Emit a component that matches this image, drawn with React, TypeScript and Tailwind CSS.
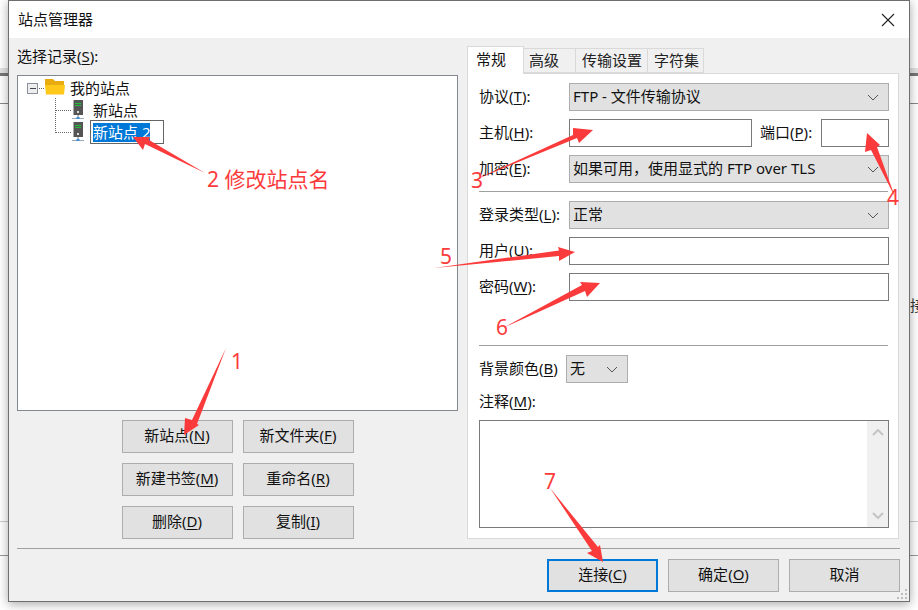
import type { ReactNode } from "react";

const FONT = "font-['Noto_Sans','Noto_Sans_CJK_SC',sans-serif]";

function Hot({ label, hot, tail = ":" }: { label: string; hot: string; tail?: string }) {
  return (
    <span className="inline-block -translate-y-px whitespace-nowrap">
      {label}(<span className="underline underline-offset-2">{hot}</span>){tail}
    </span>
  );
}

function Chevron({ className = "", weight = 1 }: { className?: string; weight?: number }) {
  return (
    <svg width="12" height="7" viewBox="0 0 12 7" className={className}>
      <path d="M1 1l5 5 5-5" fill="none" stroke="currentColor" strokeWidth={weight} />
    </svg>
  );
}

function Select({ text, className = "" }: { text: string; className?: string }) {
  return (
    <div className={`flex h-[28px] items-center justify-between border border-[#adadad] bg-[#e1e1e1] pl-[3px] pr-[9px] text-[#111] ${className}`}>
      <span className="-translate-y-px whitespace-pre">{text}</span>
      <Chevron className="text-[#555]" />
    </div>
  );
}

function Input({ className = "" }: { className?: string }) {
  return <div className={`h-[28px] border border-[#7a7a7a] bg-white ${className}`} />;
}

function Row({ label, children }: { label: ReactNode; children: ReactNode }) {
  return (
    <div className="mb-[8px] flex items-center">
      <div className="w-[90px] shrink-0">{label}</div>
      {children}
    </div>
  );
}

function Btn({ children, primary }: { children: ReactNode; primary?: boolean }) {
  return (
    <div
      className={`flex h-[33px] w-[111px] items-center justify-center bg-[#e1e1e1] pb-px ${
        primary ? "border-2 border-[#0078d7]" : "border border-[#adadad]"
      }`}
    >
      {children}
    </div>
  );
}

function ServerIcon() {
  return (
    <svg width="12" height="20" viewBox="0 0 12 20" className="shrink-0">
      <rect x="1" y="0" width="10" height="15" fill="#555" />
      <rect x="1" y="0" width="1" height="15" fill="#aaa" />
      <rect x="3" y="3" width="6" height="1" fill="#22c03a" />
      <rect x="3" y="5" width="6" height="1" fill="#22c03a" />
      <rect x="5" y="11" width="2" height="2" fill="#ddd" />
      <rect x="5.5" y="15" width="1" height="3" fill="#777" />
      <rect x="0" y="18" width="12" height="1" fill="#9ab" />
      <rect x="4.5" y="17" width="3" height="2" fill="#3a8fd8" />
    </svg>
  );
}

function FolderIcon() {
  return (
    <svg width="20" height="17" viewBox="0 0 20 17" className="shrink-0">
      <path d="M0 0h8l2 2h9v5H0z" fill="#e8ac10" />
      <path d="M0 6h20l-1 9.500H1z" fill="#ffc81a" />
    </svg>
  );
}

function Tree() {
  return (
    <div className="relative h-[336px] border border-[#828790] bg-white text-[#111]">
      <svg width="60" height="70" className="absolute left-0 top-0" shapeRendering="crispEdges">
        <rect x="9.5" y="7.5" width="10" height="10" fill="#eee" stroke="#8a8f9c" />
        <rect x="12" y="12" width="6" height="1" fill="#445" />
        <path d="M21 12.500h6M37.500 22v35M38 34.500h16M38 56.500h16" stroke="#666" strokeDasharray="1 1" fill="none" />
      </svg>
      <div className="pl-[27px] pt-[1px]">
        <div className="flex h-[21px] items-center gap-[5px]">
          <FolderIcon />
          <span>我的站点</span>
        </div>
        <div className="ml-[27px] mt-[1px] flex h-[22px] items-center gap-[8px]">
          <ServerIcon />
          <span className="ml-[1px]">新站点</span>
        </div>
        <div className="ml-[27px] flex h-[22px] items-center gap-[6px]">
          <ServerIcon />
          <div className="flex h-[24px] w-[74px] items-center border border-[#666] bg-white pl-[2px]">
            <span className="inline-block h-[19px] bg-[#0078d7] leading-[18px] text-white">新站点 2</span>
          </div>
        </div>
      </div>
    </div>
  );
}

function Annotations() {
  const arrows = [
    "226,348 197,424 199,425 184,435 185,418 192,420",
    "205,173 145,144 143,150 133,137 150,137 149,140",
    "470,182 573,135 573,128 593,130 579,143 577,138",
    "895,197 877,147 880,145 867,133 865,152 871,150",
    "434,268 559,256 559,261 575,252 558,247 559,250.500",
    "503,328 585,291 587,297 600,283 580,282 582,285",
    "550,488 592,551 587,553 603,562 600,545 598,547",
  ];
  const nums = [
    ["1", "left-[231px] top-[346px]"],
    ["3", "left-[471px] top-[165px]"],
    ["4", "left-[887px] top-[182px]"],
    ["5", "left-[440px] top-[241px]"],
    ["6", "left-[496px] top-[312px]"],
    ["7", "left-[544px] top-[466px]"],
  ];
  return (
    <div className="pointer-events-none absolute inset-0">
      <svg width="918" height="610" className="absolute inset-0">
        {arrows.map((p) => (
          <polygon key={p} points={p} fill="#fb3b3b" />
        ))}
      </svg>
      {nums.map(([n, pos]) => (
        <span key={n} className={`absolute text-[21px] leading-[30px] text-[#fb3b3b] ${pos}`}>
          {n}
        </span>
      ))}
      <span className="absolute left-[207px] top-[164px] whitespace-nowrap text-[21px] leading-[30px] text-[#fb3b3b]">
        2 修改站点名
      </span>
    </div>
  );
}

export default function App() {
  return (
    <div className={`relative h-[610px] w-[918px] overflow-hidden bg-white text-[15px] leading-[22px] ${FONT}`}>
      {/* window behind the dialog */}
      <div className="absolute left-0 top-[68px] h-[5px] w-full bg-[#e2e2e2]" />
      <div className="absolute left-0 top-[73px] h-[3px] w-full bg-[#777]" />
      <div className="absolute left-0 top-[103px] h-px w-full bg-[#888]" />
      <div className="absolute left-[910px] top-[294px] text-[#333]">接</div>
      <div className="absolute left-0 top-[521px] h-px w-full bg-[#ccc]" />
      <div className="absolute left-0 top-[555px] h-px w-full bg-[#999]" />

      <div className="absolute left-[8px] top-0 flex h-[602px] w-[902px] flex-col border border-[#6f6f6f] bg-[#f0f0f0] shadow-[0_2px_10px_rgba(0,0,0,0.35)]">
        <div className="flex h-[37px] shrink-0 items-center justify-between bg-white pl-[9px] pr-[14px] text-[#111]">
          <span className="-translate-y-px">站点管理器</span>
          <svg width="14" height="14" viewBox="0 0 14 14">
            <path d="M1 1l12 12M13 1L1 13" stroke="#222" strokeWidth="1.1" fill="none" />
          </svg>
        </div>

        <div className="flex h-[501px] shrink-0 pl-[8px]">
          <div className="w-[441px] shrink-0 pt-[8px]">
            <div className="mb-[7px] h-[22px] text-[#111]">
              <Hot label="选择记录" hot="S" />
            </div>
            <Tree />
            <div className="mt-[9px] grid grid-cols-[111px_111px] justify-center gap-x-[10px] gap-y-[10px] text-[#111]">
              <Btn><Hot label="新站点" hot="N" tail="" /></Btn>
              <Btn><Hot label="新文件夹" hot="F" tail="" /></Btn>
              <Btn><Hot label="新建书签" hot="M" tail="" /></Btn>
              <Btn><Hot label="重命名" hot="R" tail="" /></Btn>
              <Btn><Hot label="删除" hot="D" tail="" /></Btn>
              <Btn><Hot label="复制" hot="I" tail="" /></Btn>
            </div>
          </div>

          <div className="ml-[9px] w-[432px] shrink-0 pt-[8px] text-[#111]">
            <div className="flex h-[27px] items-end">
              <div className="relative z-10 h-[28px] w-[57px] translate-y-px border border-b-0 border-[#d9d9d9] bg-white pl-[8px] pt-[1px]">常规</div>
              <div className="flex h-[25px] w-[52px] items-center border-y border-r border-[#d9d9d9] pb-[2px] pl-[5px] text-[#222]">高级</div>
              <div className="flex h-[25px] w-[72px] items-center border-y border-r border-[#d9d9d9] pb-[2px] pl-[6px] text-[#222]">传输设置</div>
              <div className="flex h-[25px] w-[56px] items-center border-y border-r border-[#d9d9d9] pb-[2px] pl-[6px] text-[#222]">字符集</div>
            </div>
            <div className="h-[466px] border border-[#d9d9d9] bg-white pl-[11px] pt-[9px]">
              <Row label={<Hot label="协议" hot="T" />}>
                <Select text="FTP - 文件传输协议" className="w-[320px]" />
              </Row>
              <Row label={<Hot label="主机" hot="H" />}>
                <Input className="w-[183px]" />
                <div className="ml-[8px] w-[61px]"><Hot label="端口" hot="P" /></div>
                <Input className="w-[68px]" />
              </Row>
              <Row label={<Hot label="加密" hot="E" />}>
                <Select text="如果可用，使用显式的 FTP over TLS" className="w-[320px]" />
              </Row>
              <div className="mb-[9px] h-px w-[409px] bg-[#a0a0a0]" />
              <Row label={<Hot label="登录类型" hot="L" />}>
                <Select text="正常" className="w-[320px]" />
              </Row>
              <Row label={<Hot label="用户" hot="U" />}>
                <Input className="w-[320px]" />
              </Row>
              <Row label={<Hot label="密码" hot="W" />}>
                <Input className="w-[320px]" />
              </Row>
              <div className="mb-[9px] mt-[44px] h-px w-[409px] bg-[#a0a0a0]" />
              <div className="mb-[8px] flex items-center">
                <div className="w-[87px] shrink-0"><Hot label="背景颜色" hot="B" tail="" /></div>
                <Select text="无" className="w-[62px]" />
              </div>
              <div className="mb-[7px] h-[22px]"><Hot label="注释" hot="M" /></div>
              <div className="flex h-[108px] w-[410px] justify-end border border-[#7a7a7a] bg-white">
                <div className="flex h-full w-[21px] flex-col items-center justify-between bg-[#f0f0f0] py-[8px]">
                  <Chevron className="rotate-180 text-[#c4c4c4]" weight={2} />
                  <Chevron className="text-[#c4c4c4]" weight={2} />
                </div>
              </div>
            </div>
          </div>
        </div>

        <div className="mx-[8px] mt-[9px] h-px w-[883px] shrink-0 bg-[#a0a0a0]" />
        <div className="relative flex flex-1 items-start justify-end gap-[10px] pr-[9px] pt-[10px] text-[#111]">
          <Btn primary><Hot label="连接" hot="C" tail="" /></Btn>
          <Btn><Hot label="确定" hot="O" tail="" /></Btn>
          <Btn><span className="-translate-y-px">取消</span></Btn>
          <svg width="12" height="12" viewBox="0 0 12 12" className="absolute bottom-0 right-0" fill="#bdbdbd">
            <rect x="8" y="0" width="2" height="2" />
            <rect x="4" y="4" width="2" height="2" />
            <rect x="8" y="4" width="2" height="2" />
            <rect x="0" y="8" width="2" height="2" />
            <rect x="4" y="8" width="2" height="2" />
            <rect x="8" y="8" width="2" height="2" />
          </svg>
        </div>
      </div>

      <Annotations />
    </div>
  );
}
